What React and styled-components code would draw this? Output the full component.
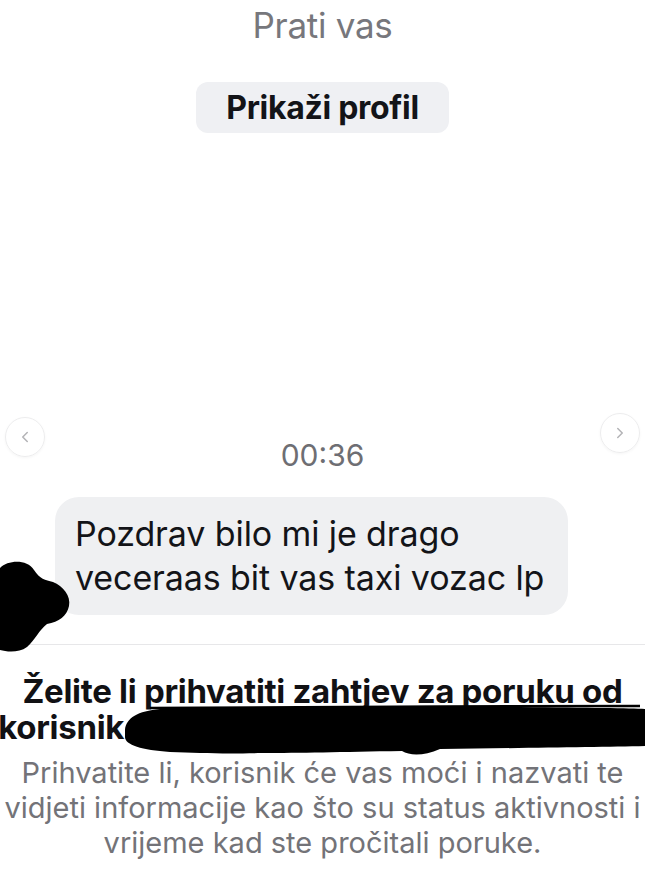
import React from 'react';
import styled, { createGlobalStyle } from 'styled-components';
import { ChevronLeft, ChevronRight } from 'lucide-react';

const GlobalStyle = createGlobalStyle`
  html, body {
    margin: 0;
    padding: 0;
    background: #ffffff;
  }
  body {
    font-family: Inter, "Liberation Sans", sans-serif;
  }
`;

const Screen = styled.div`
  position: relative;
  width: 645px;
  height: 880px;
  overflow: hidden;
  background: #ffffff;
  display: flex;
  flex-direction: column;
  align-items: center;
`;

const FollowsYou = styled.div`
  margin-top: 5px;
  font-size: 35px;
  line-height: 40px;
  color: #77777c;
  letter-spacing: -0.3px;
`;

const ProfileButton = styled.button`
  margin-top: 37px;
  height: 51px;
  padding: 0 30px;
  border: none;
  border-radius: 12px;
  background: #eff0f3;
  font-family: Inter, "Liberation Sans", sans-serif;
  font-weight: 700;
  font-size: 32px;
  color: #131418;
  letter-spacing: -0.3px;
`;

const NavRow = styled.div`
  align-self: stretch;
  margin-top: 284px;
  padding: 0 5px;
  display: flex;
  justify-content: space-between;
  align-items: flex-start;
`;

const ArrowCircle = styled.div`
  width: 38px;
  height: 38px;
  border-radius: 50%;
  border: 1px solid #ededee;
  box-shadow: 0 1px 3px rgba(0, 0, 0, 0.04);
  display: flex;
  align-items: center;
  justify-content: center;
  color: #b3b3b6;
  margin-top: ${p => p.$offset}px;
`;

const Time = styled.div`
  margin-top: 20px;
  font-size: 30px;
  line-height: 36px;
  color: #6e6e73;
`;

const BubbleRow = styled.div`
  align-self: stretch;
  padding-left: 55px;
  margin-top: 24px;
  display: flex;
`;

const Bubble = styled.div`
  width: 513px;
  box-sizing: border-box;
  padding: 15px 20px 15px;
  border-radius: 24px;
  background: #eff0f2;
  font-size: 34px;
  line-height: 44px;
  color: #131418;
  letter-spacing: -0.1px;
`;

const Divider = styled.div`
  align-self: stretch;
  margin-top: 29px;
  height: 1px;
  background: #e7e7e9;
`;

const Request = styled.div`
  width: 720px;
  flex-shrink: 0;
  margin-top: 28px;
  text-align: center;
  white-space: nowrap;
`;

const RequestTitle = styled.div`
  font-weight: 700;
  font-size: 33px;
  line-height: 36px;
  color: #111114;
  letter-spacing: -0.3px;
`;

const RequestText = styled.div`
  margin-top: 10px;
  font-size: 29px;
  line-height: 35px;
  color: #737378;
  letter-spacing: 0;
`;

const Censor = styled.svg`
  position: absolute;
  left: ${p => p.$left}px;
  top: ${p => p.$top}px;
  pointer-events: none;
`;

const NameGap = styled.span`
  display: inline-block;
  width: 512px;
`;

export default function App() {
  return (
    <Screen>
      <GlobalStyle />
      <FollowsYou>Prati vas</FollowsYou>
      <ProfileButton>Prikaži profil</ProfileButton>

      <NavRow>
        <ArrowCircle $offset={0}>
          <ChevronLeft size={18} strokeWidth={2} />
        </ArrowCircle>
        <Time>00:36</Time>
        <ArrowCircle $offset={-4}>
          <ChevronRight size={18} strokeWidth={2} />
        </ArrowCircle>
      </NavRow>

      <BubbleRow>
        <Bubble>
          Pozdrav bilo mi je drago
          <br />
          veceraas bit vas taxi vozac lp
        </Bubble>
      </BubbleRow>

      <Divider />

      <Request>
        <RequestTitle>
          Želite li prihvatiti zahtjev za poruku od
          <br />
          korisnik<NameGap />,
        </RequestTitle>
        <RequestText>
          Prihvatite li, korisnik će vas moći i nazvati te
          <br />
          vidjeti informacije kao što su status aktivnosti i
          <br />
          vrijeme kad ste pročitali poruke.
        </RequestText>
      </Request>

      <Censor $left={0} $top={558} width="72" height="96" viewBox="0 0 72 96">
        <path
          d="M0 10 C8 2 27 1 34 12 C40 21 45 22 53 24 C63 28 71 38 69 48 C67 58 59 64 47 66 C39 72 35 82 27 89 C19 95 7 94 0 92 Z"
          fill="#000"
        />
      </Censor>

      <Censor $left={0} $top={690} width="645" height="80" viewBox="0 0 645 80">
        <path d="M150 18 C300 17 480 16 640 16" stroke="#000" strokeWidth="2.5" fill="none" />
        <path
          d="M125 40 C126 28 138 21 160 19 C260 16 400 16 520 17 C590 18 630 18 645 19 L645 56 C600 57 520 58 440 59 C424 66 410 66 402 61 C340 62 300 63 262 63 C222 64 200 63 170 62 C142 60 125 55 125 47 Z"
          fill="#000"
        />
      </Censor>
    </Screen>
  );
}
